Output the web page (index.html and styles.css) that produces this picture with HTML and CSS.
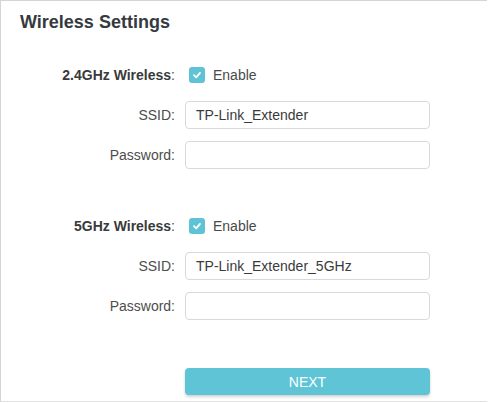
FILE: index.html
```html
<!DOCTYPE html>
<html>
<head>
<meta charset="utf-8">
<link rel="stylesheet" href="styles.css">
</head>
<body>
<div class="panel">
  <h1 class="title">Wireless Settings</h1>
  <div class="form">
    <div class="section">
      <div class="label"><b>2.4GHz Wireless</b>:</div>
      <div class="field check-field">
        <span class="checkbox"><svg width="10" height="10" viewBox="0 0 10 10"><path d="M2 5.2 L4.2 7.3 L8 2.9" fill="none" stroke="#fff" stroke-width="1.8" stroke-linecap="round" stroke-linejoin="round"/></svg></span>
        <span class="check-text">Enable</span>
      </div>
      <div class="label">SSID:</div>
      <div class="field"><div class="input">TP-Link_Extender</div></div>
      <div class="label">Password:</div>
      <div class="field"><div class="input"></div></div>
    </div>
    <div class="section second">
      <div class="label"><b>5GHz Wireless</b>:</div>
      <div class="field check-field">
        <span class="checkbox"><svg width="10" height="10" viewBox="0 0 10 10"><path d="M2 5.2 L4.2 7.3 L8 2.9" fill="none" stroke="#fff" stroke-width="1.8" stroke-linecap="round" stroke-linejoin="round"/></svg></span>
        <span class="check-text">Enable</span>
      </div>
      <div class="label">SSID:</div>
      <div class="field"><div class="input">TP-Link_Extender_5GHz</div></div>
      <div class="label">Password:</div>
      <div class="field"><div class="input"></div></div>
    </div>
    <div class="actions">
      <div></div>
      <button class="next">NEXT</button>
    </div>
  </div>
</div>
</body>
</html>
```

FILE: styles.css
```css
html, body {
  margin: 0;
  padding: 0;
  background: #fff;
}
body {
  font-family: "Liberation Sans", Arial, sans-serif;
  color: #4a4a4a;
}
.panel {
  box-sizing: border-box;
  width: 487px;
  height: 402px;
  border-top: 1px solid #d4d4d4;
  border-left: 1px solid #d4d4d4;
  border-bottom: 1px solid #e2e2e2;
}
.title {
  margin: 0;
  padding: 9px 0 0 19px;
  font-size: 18px;
  line-height: 24px;
  font-weight: bold;
  color: #353a40;
}
.form {
  margin-top: 27px;
}
.section {
  display: grid;
  grid-template-columns: 174px 245px;
  column-gap: 10px;
  row-gap: 12px;
  grid-auto-rows: 28px;
}
.section.second {
  margin-top: 43px;
}
.label {
  display: flex;
  align-items: center;
  justify-content: flex-end;
  font-size: 14px;
  color: #4d4d4d;
}
.label b {
  color: #3a3a3a;
}
.field {
  display: flex;
  align-items: center;
}
.check-field {
  padding-left: 4px;
}
.checkbox {
  width: 16px;
  height: 16px;
  border-radius: 3px;
  background: #5ec4d5;
  display: flex;
  align-items: center;
  justify-content: center;
}
.check-text {
  margin-left: 8px;
  font-size: 14px;
  color: #4a4a4a;
}
.input {
  box-sizing: border-box;
  width: 245px;
  height: 28px;
  border: 1px solid #d9d9d9;
  border-radius: 4px;
  padding: 0 10px;
  font-size: 14px;
  line-height: 26px;
  color: #3a3a3a;
}
.actions {
  display: grid;
  grid-template-columns: 174px 245px;
  column-gap: 10px;
  margin-top: 48px;
}
.next {
  height: 27px;
  border: none;
  border-radius: 4px;
  background: #5ec4d6;
  color: #fff;
  font-family: "Liberation Sans", Arial, sans-serif;
  font-size: 14px;
  padding: 0;
  box-shadow: 0 2px 3px rgba(0, 0, 0, 0.18);
}
```
